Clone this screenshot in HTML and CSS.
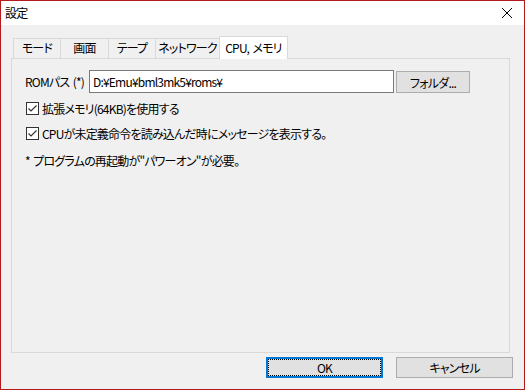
FILE: index.html
```html
<!DOCTYPE html>
<html lang="ja">
<head>
    <meta charset="UTF-8">
    <title>設定</title>
    <link rel="stylesheet" href="styles.css">
</head>
<body>
    <div class="window">
        <div class="titlebar">
            <span class="title">設定</span>
            <svg class="close" width="12" height="12" viewBox="0 0 12 12" fill="none" stroke="#000" stroke-width="1">
                <path d="M1 1L11 11M11 1L1 11"></path>
            </svg>
        </div>
        <div class="client">
            <div class="tabs">
                <div class="tab tab-mode">モード</div>
                <div class="tab tab-screen">画面</div>
                <div class="tab tab-tape">テープ</div>
                <div class="tab tab-net">ネットワーク</div>
                <div class="tab tab-cpu active">CPU, メモリ</div>
            </div>
            <div class="panel">
                <div class="row rom-row">
                    <span class="label">ROMパス (*)</span>
                    <input type="text" class="path" value="D:¥Emu¥bml3mk5¥roms¥">
                    <button class="btn btn-folder">フォルダ...</button>
                </div>
                <label class="row check-row">
                    <svg class="checkbox" width="13" height="13" viewBox="0 0 13 13">
                        <rect x="0.5" y="0.5" width="12" height="12" fill="#fff" stroke="#333"></rect>
                        <path d="M2.5 6.5L5 9L10.5 3.5" fill="none" stroke="#333" stroke-width="1.2"></path>
                    </svg>
                    <span>拡張メモリ(64KB)を使用する</span>
                </label>
                <label class="row check-row">
                    <svg class="checkbox" width="13" height="13" viewBox="0 0 13 13">
                        <rect x="0.5" y="0.5" width="12" height="12" fill="#fff" stroke="#333"></rect>
                        <path d="M2.5 6.5L5 9L10.5 3.5" fill="none" stroke="#333" stroke-width="1.2"></path>
                    </svg>
                    <span>CPUが未定義命令を読み込んだ時にメッセージを表示する。</span>
                </label>
                <div class="row note">* プログラムの再起動が"パワーオン"が必要。</div>
            </div>
            <div class="footer">
                <button class="btn btn-ok">OK</button>
                <button class="btn">キャンセル</button>
            </div>
        </div>
    </div>
</body>
</html>
```

FILE: styles.css
```css
* {
    box-sizing: border-box;
}

body {
    margin: 0;
    background: #f0f0f0;
    font-family: "Noto Sans CJK JP", "Noto Sans", sans-serif;
    font-size: 12px;
    letter-spacing: -0.8px;
    word-spacing: 1.5px;
    font-feature-settings: "palt";
    color: #000;
}

.window {
    width: 525px;
    height: 390px;
    border: 1px solid #b4191c;
    display: flex;
    flex-direction: column;
}

/* title bar */
.titlebar {
    height: 24px;
    background: #fff;
    display: flex;
    align-items: center;
    justify-content: space-between;
    padding: 0 11px 0 4px;
}

.title {
    line-height: 24px;
}

/* client area */
.client {
    flex: 1;
    display: flex;
    flex-direction: column;
    padding: 11px 14px 11px 10px;
}

.tabs {
    display: flex;
    align-items: flex-end;
    height: 22px;
    padding-left: 2px;
}

.tab {
    height: 20px;
    line-height: 18px;
    text-align: center;
    border: 1px solid #d9d9d9;
    border-bottom: none;
    background: #f0f0f0;
    margin-left: -1px;
    white-space: nowrap;
}

.tab:first-child {
    margin-left: 0;
}

.tab-mode { width: 48px; }
.tab-screen { width: 49px; }
.tab-tape { width: 48px; }
.tab-net { width: 65px; }
.tab-cpu { width: 69px; }

.tab.active {
    height: 23px;
    line-height: 21px;
    background: #fff;
    margin-bottom: -1px;
    position: relative;
    z-index: 1;
}

.panel {
    height: 295px;
    border: 1px solid #d9d9d9;
    background: #f0f0f0;
    padding: 11px 12px 0 13px;
}

.row {
    display: flex;
    align-items: center;
}

.rom-row {
    height: 23px;
}

.label {
    width: 64px;
    white-space: nowrap;
}

.path {
    width: 305px;
    height: 23px;
    border: 1px solid #7a7a7a;
    padding: 0 3px;
    font: inherit;
    letter-spacing: inherit;
    font-feature-settings: "palt";
    color: #000;
    background: #fff;
    outline: none;
}

.btn {
    height: 22px;
    border: 1px solid #adadad;
    background: #e1e1e1;
    font: inherit;
    letter-spacing: inherit;
    word-spacing: inherit;
    font-feature-settings: "palt";
    color: #000;
    padding: 0;
    width: 117px;
}

.btn-folder {
    width: 74px;
    height: 22px;
    margin-left: 2px;
    margin-top: 1px;
    align-self: flex-start;
}

.check-row {
    height: 20px;
    margin-top: 5px;
    padding-left: 1px;
}

.checkbox {
    margin-right: 3px;
    flex-shrink: 0;
}

.note {
    height: 20px;
    margin-top: 7px;
}

/* dialog buttons */
.footer {
    display: flex;
    justify-content: flex-end;
    gap: 13px;
    margin-top: 4px;
    margin-right: -3px;
}

.footer .btn {
    height: 21px;
}

.btn-ok {
    border-color: #0078d7;
    box-shadow: inset 0 0 0 1px #0078d7;
    outline: 1px dotted #000;
    outline-offset: -3px;
}
```
